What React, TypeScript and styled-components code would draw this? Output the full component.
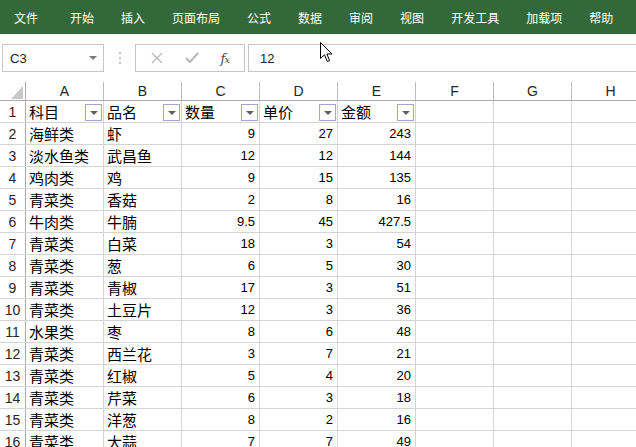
import styled, { createGlobalStyle } from "styled-components";

const GlobalStyle = createGlobalStyle`
  html, body {
    margin: 0;
    padding: 0;
    background: #ffffff;
    overflow: hidden;
  }
  body {
    font-family: "Liberation Sans", "Noto Sans CJK SC", sans-serif;
  }
`;

const Page = styled.div`
  position: relative;
  width: 636px;
  height: 447px;
  overflow: hidden;
  background: #ffffff;
`;

const MenuBar = styled.div`
  height: 34px;
  background: #33693a;
  display: flex;
  align-items: center;
  gap: 27px;
  padding-left: 14px;
  color: #ffffff;
  font-family: "Noto Sans CJK SC", sans-serif;
  font-size: 12px;
`;

const MenuItem = styled.span<{ $first?: boolean }>`
  white-space: nowrap;
  margin-right: ${(p) => (p.$first ? "5px" : "0")};
`;

const FormulaRow = styled.div`
  display: flex;
  align-items: stretch;
  height: 28px;
  margin-top: 10px;
  padding-left: 2px;
`;

const NameBox = styled.div`
  width: 102px;
  box-sizing: border-box;
  border: 1px solid #c6c6c6;
  display: flex;
  align-items: center;
  justify-content: space-between;
  padding: 0 6px 0 7px;
  font-size: 13px;
  color: #222;
`;

const Caret = styled.span`
  width: 0;
  height: 0;
  border-left: 4px solid transparent;
  border-right: 4px solid transparent;
  border-top: 4px solid #7a7a7a;
`;

const Grip = styled.div`
  width: 31px;
  display: flex;
  flex-direction: column;
  align-items: center;
  justify-content: center;
  gap: 3px;

  span {
    width: 2px;
    height: 2px;
    background: #c4c4c4;
  }
`;

const FuncBox = styled.div`
  width: 110px;
  box-sizing: border-box;
  border: 1px solid #c6c6c6;
  display: flex;
  align-items: center;
  justify-content: space-around;
  padding: 0 4px;
`;

const Fx = styled.span`
  font-family: "DejaVu Serif", "Liberation Serif", serif;
  font-style: italic;
  font-size: 13px;
  color: #4a4a4a;
  letter-spacing: -1px;

  small {
    font-size: 10px;
  }
`;

const FormulaInput = styled.div`
  flex: 1;
  margin-left: 3px;
  border-top: 1px solid #c6c6c6;
  border-bottom: 1px solid #c6c6c6;
  border-left: 1px solid #c6c6c6;
  display: flex;
  align-items: center;
  padding-left: 11px;
  font-size: 13px;
  color: #222;
`;

const Sheet = styled.div`
  margin-top: 10px;
  width: 660px;
`;

const HeaderRow = styled.div`
  display: flex;
  height: 19px;
  box-sizing: border-box;
  border-bottom: 1px solid #ababab;
`;

const Corner = styled.div`
  position: relative;
  width: 26px;
  box-sizing: border-box;
  border-right: 1px solid #ababab;
`;

const CornerTri = styled.div`
  position: absolute;
  right: 2px;
  bottom: 1px;
  width: 0;
  height: 0;
  border-left: 12px solid transparent;
  border-bottom: 13px solid #c8c8c8;
`;

const ColHead = styled.div`
  width: 78px;
  box-sizing: border-box;
  border-right: 1px solid #bdbdbd;
  text-align: center;
  font-size: 14px;
  line-height: 18px;
  color: #262626;
`;

const Row = styled.div`
  display: flex;
  height: 22px;
  box-sizing: border-box;
  border-bottom: 1px solid #d4d4d4;
`;

const RowHead = styled.div`
  width: 26px;
  box-sizing: border-box;
  border-right: 1px solid #ababab;
  text-align: center;
  font-size: 14px;
  line-height: 23px;
  color: #262626;
`;

const Cell = styled.div<{ $num?: boolean }>`
  position: relative;
  width: 78px;
  box-sizing: border-box;
  border-right: 1px solid #d4d4d4;
  padding: ${(p) => (p.$num ? "0 4px 0 0" : "0 0 0 3px")};
  text-align: ${(p) => (p.$num ? "right" : "left")};
  font-family: ${(p) =>
    p.$num
      ? `"Liberation Sans", sans-serif`
      : `"Noto Sans CJK SC", sans-serif`};
  font-size: ${(p) => (p.$num ? "13px" : "15px")};
  line-height: 22px;
  color: #000;
  white-space: nowrap;
`;

const FilterButton = styled.span`
  position: absolute;
  right: 1px;
  bottom: 1px;
  width: 17px;
  height: 17px;
  box-sizing: border-box;
  border: 1px solid #a7a2d6;
  background: #ffffff;
  display: flex;
  align-items: center;
  justify-content: center;

  &::after {
    content: "";
    width: 0;
    height: 0;
    border-left: 4px solid transparent;
    border-right: 4px solid transparent;
    border-top: 4px solid #5f5f5f;
  }
`;

const Cursor = styled.svg`
  position: absolute;
  left: 320px;
  top: 42px;
`;

const menus = [
  "文件",
  "开始",
  "插入",
  "页面布局",
  "公式",
  "数据",
  "审阅",
  "视图",
  "开发工具",
  "加载项",
  "帮助",
];

const cols = ["A", "B", "C", "D", "E", "F", "G", "H"];

const rows: (string | number)[][] = [
  ["海鲜类", "虾", 9, 27, 243],
  ["淡水鱼类", "武昌鱼", 12, 12, 144],
  ["鸡肉类", "鸡", 9, 15, 135],
  ["青菜类", "香菇", 2, 8, 16],
  ["牛肉类", "牛腩", 9.5, 45, 427.5],
  ["青菜类", "白菜", 18, 3, 54],
  ["青菜类", "葱", 6, 5, 30],
  ["青菜类", "青椒", 17, 3, 51],
  ["青菜类", "土豆片", 12, 3, 36],
  ["水果类", "枣", 8, 6, 48],
  ["青菜类", "西兰花", 3, 7, 21],
  ["青菜类", "红椒", 5, 4, 20],
  ["青菜类", "芹菜", 6, 3, 18],
  ["青菜类", "洋葱", 8, 2, 16],
  ["青菜类", "大蒜", 7, 7, 49],
];

const headers = ["科目", "品名", "数量", "单价", "金额"];

export default function App() {
  return (
    <Page>
      <GlobalStyle />
      <MenuBar>
        {menus.map((m, i) => (
          <MenuItem key={m} $first={i === 0}>
            {m}
          </MenuItem>
        ))}
      </MenuBar>

      <FormulaRow>
        <NameBox>
          C3
          <Caret />
        </NameBox>
        <Grip>
          <span />
          <span />
          <span />
        </Grip>
        <FuncBox>
          <svg width="12" height="12" viewBox="0 0 12 12">
            <path d="M1 1 L11 11 M11 1 L1 11" stroke="#b8b8b8" strokeWidth="1.3" fill="none" />
          </svg>
          <svg width="14" height="12" viewBox="0 0 14 12">
            <path d="M1 6 L5 10 L13 1" stroke="#b8b8b8" strokeWidth="2" fill="none" />
          </svg>
          <Fx>
            f<small>x</small>
          </Fx>
        </FuncBox>
        <FormulaInput>12</FormulaInput>
      </FormulaRow>

      <Sheet>
        <HeaderRow>
          <Corner>
            <CornerTri />
          </Corner>
          {cols.map((c) => (
            <ColHead key={c}>{c}</ColHead>
          ))}
        </HeaderRow>

        <Row>
          <RowHead>1</RowHead>
          {cols.map((c, i) => (
            <Cell key={c}>
              {headers[i]}
              {i < 5 && <FilterButton />}
            </Cell>
          ))}
        </Row>

        {rows.map((r, ri) => (
          <Row key={ri}>
            <RowHead>{ri + 2}</RowHead>
            {cols.map((c, ci) => {
              const v = r[ci];
              return (
                <Cell key={c} $num={typeof v === "number"}>
                  {v}
                </Cell>
              );
            })}
          </Row>
        ))}
      </Sheet>

      <Cursor width="13" height="22" viewBox="0 0 13 22">
        <path
          d="M0.5 0.5 L0.5 16.5 L4.5 12.8 L7.3 19.5 L9.6 18.5 L6.9 12 L12 12 Z"
          fill="#ffffff"
          stroke="#000000"
          strokeWidth="1"
          strokeLinejoin="miter"
        />
      </Cursor>
    </Page>
  );
}
